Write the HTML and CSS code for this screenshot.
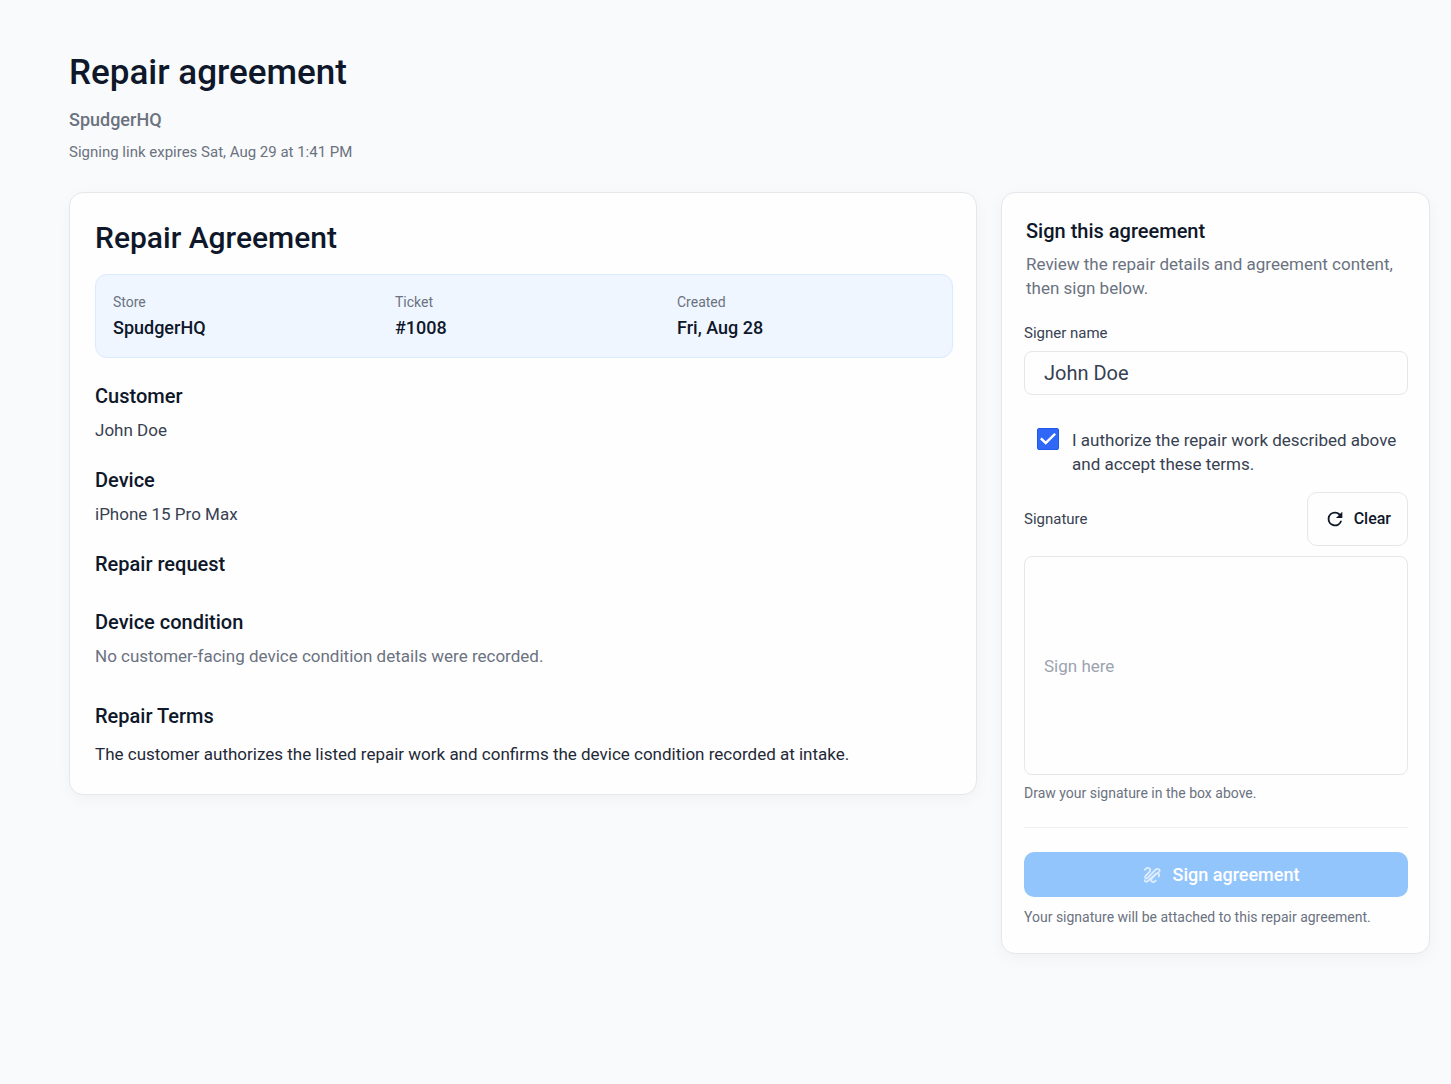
FILE: index.html
```html
<!DOCTYPE html>
<html lang="en">
<head>
<meta charset="utf-8">
<meta name="viewport" content="width=device-width, initial-scale=1">
<title>Repair agreement</title>
<link rel="stylesheet" href="styles.css">
</head>
<body>
<div class="page">
  <header class="page-header">
    <h1 class="page-title">Repair agreement</h1>
    <p class="shop-name">SpudgerHQ</p>
    <p class="expiry">Signing link expires Sat, Aug 29 at 1:41 PM</p>
  </header>
  <main class="layout">
    <article class="card agreement">
      <h2 class="agreement-title">Repair Agreement</h2>
      <dl class="summary">
        <div><dt>Store</dt><dd>SpudgerHQ</dd></div>
        <div><dt>Ticket</dt><dd>#1008</dd></div>
        <div><dt>Created</dt><dd>Fri, Aug 28</dd></div>
      </dl>
      <div class="sections">
        <section class="section"><h3>Customer</h3><p>John Doe</p></section>
        <section class="section"><h3>Device</h3><p>iPhone 15 Pro Max</p></section>
        <section class="section"><h3>Repair request</h3></section>
        <section class="section"><h3>Device condition</h3><p class="muted">No customer-facing device condition details were recorded.</p></section>
        <section class="section terms"><h3>Repair Terms</h3><p>The customer authorizes the listed repair work and confirms the device condition recorded at intake.</p></section>
      </div>
    </article>
    <form class="card signing">
      <div class="signing-header">
        <h2 class="signing-title">Sign this agreement</h2>
        <p class="signing-intro">Review the repair details and agreement content, then sign below.</p>
      </div>
      <label class="field-label" for="signer">Signer name</label>
      <input class="text-input" id="signer" type="text" value="John Doe">
      <div class="consent">
        <input class="checkbox" id="consent" type="checkbox" checked>
        <label for="consent">I authorize the repair work described above and accept these terms.</label>
      </div>
      <div class="signature-head">
        <span class="field-label" id="signature-label">Signature</span>
        <button class="clear-button" type="button">
          <svg width="22" height="22" viewBox="0 0 24 24" fill="currentColor" aria-hidden="true"><path d="M17.65 6.35A7.96 7.96 0 0 0 12 4a8 8 0 1 0 7.73 10h-2.08A6 6 0 1 1 12 6c1.66 0 3.14.69 4.22 1.78L13 11h7V4z"/></svg>
          Clear
        </button>
      </div>
      <div class="signature-pad" tabindex="0" aria-labelledby="signature-label">Sign here</div>
      <p class="hint">Draw your signature in the box above.</p>
      <hr class="divider">
      <button class="submit-button" type="submit" disabled>
        <svg width="18" height="18" viewBox="0 0 24 24" fill="none" stroke="currentColor" stroke-width="2.400" stroke-linecap="round" stroke-linejoin="round" aria-hidden="true"><path d="M2.500 5C4.500 2 8 1.800 9.300 4c1.200 2-.3 3.500-1.500 4.700L3.500 13c-2 2.300.8 4.700 3 2.600L16.500 5.200c2.500-2.600 6.500-1.200 5.500 1.800-.6 1.800-3 2.200-4.200 3.500L12.500 16c-3.500 3.600 0 7 3 4.600l1.500-1.300M17 10.500 6.500 20c-2 1.800-4.500 1-4-1M17 10.500c3-2 5.500.5 4 3.500"/></svg>
        Sign agreement
      </button>
      <p class="hint">Your signature will be attached to this repair agreement.</p>
    </form>
  </main>
</div>
</body>
</html>
```
FILE: styles.css
```css
* {
  box-sizing: border-box;
}

body {
  margin: 0;
  background: #f9fafb;
  color: #0f172a;
  font-family: Roboto, "Liberation Sans", sans-serif;
  font-size: 17px;
  line-height: 24px;
}

h1, h2, h3, p, dl, dd {
  margin: 0;
  font-weight: 500;
}

p {
  font-weight: 400;
}

button, input {
  font: inherit;
}

.page {
  padding: 49px 21px 48px 69px;
}

.page-header {
  margin-bottom: 30px;
}

.page-title {
  font-size: 35px;
  line-height: 48px;
}

.shop-name {
  margin: 11px 0 10px;
  color: #6b7280;
  font-size: 18px;
  font-weight: 500;
}

.expiry {
  color: #6b7280;
  font-size: 15px;
  line-height: 20px;
}

.layout {
  display: grid;
  grid-template-columns: minmax(0, 1fr) 429px;
  gap: 24px;
  align-items: start;
}

.card {
  background: #fefefe;
  border: 1px solid #e5e7eb;
  border-radius: 14px;
  box-shadow: 0 4px 16px rgba(15, 23, 42, 0.04);
}

.agreement {
  padding: 26px 23px 26px 25px;
}

.agreement-title {
  font-size: 30px;
  line-height: 38px;
}

.summary {
  display: grid;
  grid-template-columns: repeat(3, 1fr);
  gap: 24px;
  margin: 17px 0 24px;
  padding: 17px;
  background: #eff6ff;
  border: 1px solid #dbeafe;
  border-radius: 12px;
}

.summary dt {
  margin-bottom: 4px;
  color: #6b7280;
  font-size: 14px;
  font-weight: 400;
  line-height: 20px;
}

.summary dd {
  font-size: 18px;
  font-weight: 500;
}

.sections {
  display: grid;
  gap: 24px;
}

.section {
  min-height: 34px;
  color: #374151;
}

.section h3 {
  color: #0f172a;
  font-size: 20px;
  line-height: 28px;
}

.section p {
  margin-top: 8px;
}

.section .muted {
  color: #6b7280;
}

.terms {
  margin-top: 10px;
  color: #1f2937;
}

.terms p {
  margin-top: 10px;
  line-height: 28px;
}

.signing {
  padding: 24px 21px 26px 22px;
}

.signing-header {
  margin-bottom: 23px;
  padding-left: 2px;
}

.signing-title {
  font-size: 20px;
  line-height: 28px;
}

.signing-intro {
  margin-top: 7px;
  color: #6b7280;
}

.field-label {
  display: block;
  color: #374151;
  font-size: 15px;
  line-height: 20px;
}

.text-input {
  display: block;
  width: 100%;
  height: 44px;
  margin-top: 8px;
  padding: 0 19px;
  border: 1px solid #e5e7eb;
  border-radius: 8px;
  background: #fefefe;
  color: #374151;
  font-size: 20px;
}

.consent {
  display: flex;
  align-items: flex-start;
  gap: 13px;
  margin: 33px 0 16px;
  padding-left: 13px;
  color: #374151;
}

.checkbox {
  display: grid;
  flex: none;
  place-items: center;
  width: 22px;
  height: 22px;
  margin: 0;
  appearance: none;
  border: 1px solid #2558e8;
  border-radius: 2px;
}

.checkbox:checked {
  background: #2f67f6;
}

.checkbox:checked::before {
  content: "";
  width: 16px;
  height: 12px;
  background: #fff;
  clip-path: polygon(0 52%, 11% 38%, 36% 69%, 89% 0, 100% 13%, 36% 98%);
}

.signature-head {
  display: flex;
  align-items: center;
  justify-content: space-between;
}

.clear-button {
  display: flex;
  align-items: center;
  gap: 8px;
  height: 54px;
  padding: 0 16px;
  border: 1px solid #e5e7eb;
  border-radius: 10px;
  background: #fefefe;
  color: #0f172a;
  font-size: 16px;
  font-weight: 500;
}

.signature-pad {
  display: flex;
  align-items: center;
  min-height: 219px;
  margin: 10px 0 8px;
  padding: 0 19px;
  border: 1px solid #e5e7eb;
  border-radius: 8px;
  color: #9ca3af;
}

.hint {
  color: #6b7280;
  font-size: 14px;
  line-height: 20px;
}

.divider {
  margin: 24px 0;
  border: 0;
  border-top: 1px solid #eef0f2;
}

.submit-button {
  display: flex;
  align-items: center;
  justify-content: center;
  gap: 12px;
  width: 100%;
  height: 45px;
  margin-bottom: 10px;
  padding: 0 0 0 10px;
  border: 0;
  border-radius: 10px;
  background: #93c5fd;
  color: #fff;
  font-size: 18px;
  font-weight: 500;
}

.submit-button svg {
  opacity: 0.7;
}

@media (max-width: 900px) {
  .page {
    padding: 24px;
  }

  .layout {
    grid-template-columns: minmax(0, 1fr);
  }
}
```
